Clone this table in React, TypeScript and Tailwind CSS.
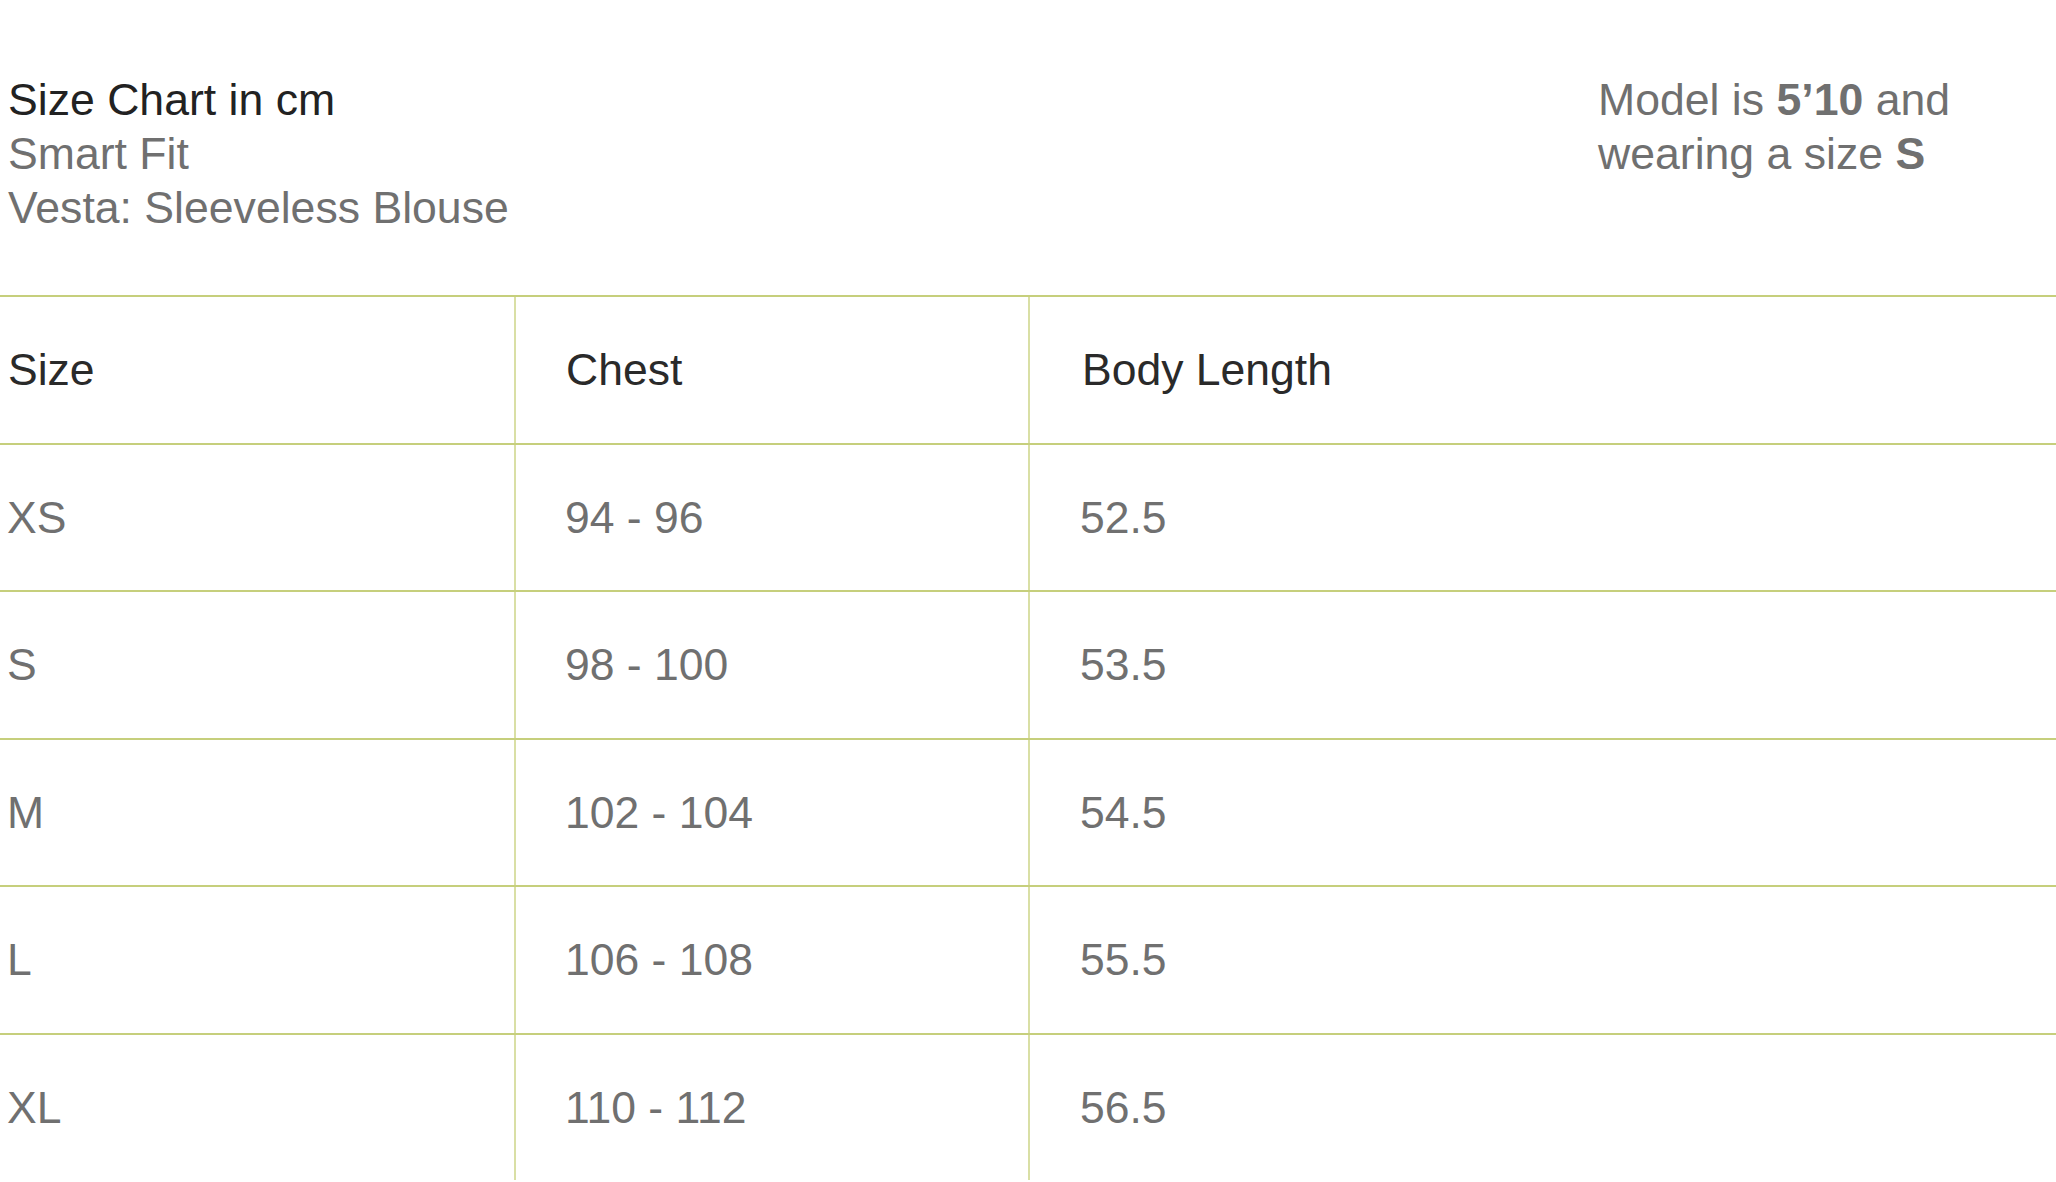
import React from "react";

const rows = [
  ["XS", "94 - 96", "52.5"],
  ["S", "98 - 100", "53.5"],
  ["M", "102 - 104", "54.5"],
  ["L", "106 - 108", "55.5"],
  ["XL", "110 - 112", "56.5"],
];

export default function App() {
  return (
    <div
      className="w-[2056px] h-[1182px] overflow-hidden bg-white"
      style={{ fontFamily: '"Liberation Sans", Arial, sans-serif' }}
    >
      <div className="flex pt-[73px] text-[44.6px] leading-[54px]">
        <div className="flex-1 pl-[8px]">
          <div className="text-[#222222]">Size Chart in cm</div>
          <div className="text-[#707070]">Smart Fit</div>
          <div className="text-[#707070]">Vesta: Sleeveless Blouse</div>
        </div>
        <div className="w-[458px] text-[#707070]">
          <div>
            Model is <span className="font-bold">5’10</span> and
          </div>
          <div>
            wearing a size <span className="font-bold">S</span>
          </div>
        </div>
      </div>

      <div className="mt-[60px] text-[44.5px] leading-[1.15]">
        <div className="grid grid-cols-[514px_514px_1fr] h-[147.5px] border-t-2 border-[#c6cf7c] text-[#2a2a2a]">
          <div className="flex items-center pl-[8px]">Size</div>
          <div className="flex items-center pl-[50px] border-l-2 border-[#d9dfa5]">Chest</div>
          <div className="flex items-center pl-[52px] border-l-2 border-[#d9dfa5]">Body Length</div>
        </div>
        {rows.map((r) => (
          <div
            key={r[0]}
            className="grid grid-cols-[514px_514px_1fr] h-[147.5px] border-t-2 border-[#c6cf7c] text-[#707070]"
          >
            <div className="flex items-center pl-[7px]">{r[0]}</div>
            <div className="flex items-center pl-[49px] border-l-2 border-[#d9dfa5]">{r[1]}</div>
            <div className="flex items-center pl-[50px] border-l-2 border-[#d9dfa5]">{r[2]}</div>
          </div>
        ))}
      </div>
    </div>
  );
}
